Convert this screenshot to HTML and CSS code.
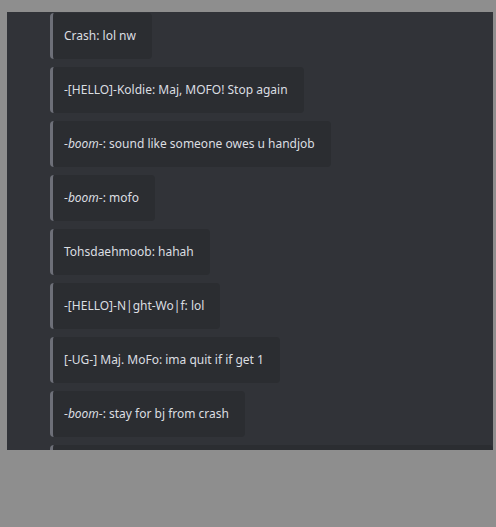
FILE: index.html
```html
<!DOCTYPE html>
<html lang="en">
<head>
    <meta charset="UTF-8">
    <title>chat log</title>
    <link rel="stylesheet" href="styles.css">
</head>
<body>
    <div class="panel">
        <div class="log">
            <div class="msg">Crash: lol nw</div>
            <div class="msg">-[HELLO]-Koldie: Maj, MOFO! Stop again</div>
            <div class="msg">-<em>boom</em>-: sound like someone owes u handjob</div>
            <div class="msg">-<em>boom</em>-: mofo</div>
            <div class="msg">Tohsdaehmoob: hahah</div>
            <div class="msg">-[HELLO]-N|ght-Wo|f: lol</div>
            <div class="msg">[-UG-] Maj. MoFo: ima quit if if get 1</div>
            <div class="msg">-<em>boom</em>-: stay for bj from crash</div>
            <div class="msg msg-wide">&nbsp;</div>
        </div>
    </div>
</body>
</html>
```

FILE: styles.css
```css
* {
    margin: 0;
    padding: 0;
    box-sizing: border-box;
}

body {
    background: #8e8e8e;
    font-family: 'Noto Sans', 'Open Sans', sans-serif;
    padding: 12px 3px 0 7px;
}

/* 聊天面板 */
.panel {
    width: 486px;
    height: 438px;
    background: #313338;
    overflow: hidden;
}

.log {
    display: flex;
    flex-direction: column;
    align-items: flex-start;
    gap: 8px;
    padding: 1px 0 0 43px;
}

.msg {
    background: #2b2d31;
    color: #dbdee1;
    font-size: 12px;
    line-height: 18px;
    padding: 14px 16px 14px 11px;
    border-left: 3px solid #6d6f78;
    border-radius: 4px;
    white-space: nowrap;
}

.msg em {
    font-style: italic;
}

.msg-wide {
    align-self: stretch;
}
```
